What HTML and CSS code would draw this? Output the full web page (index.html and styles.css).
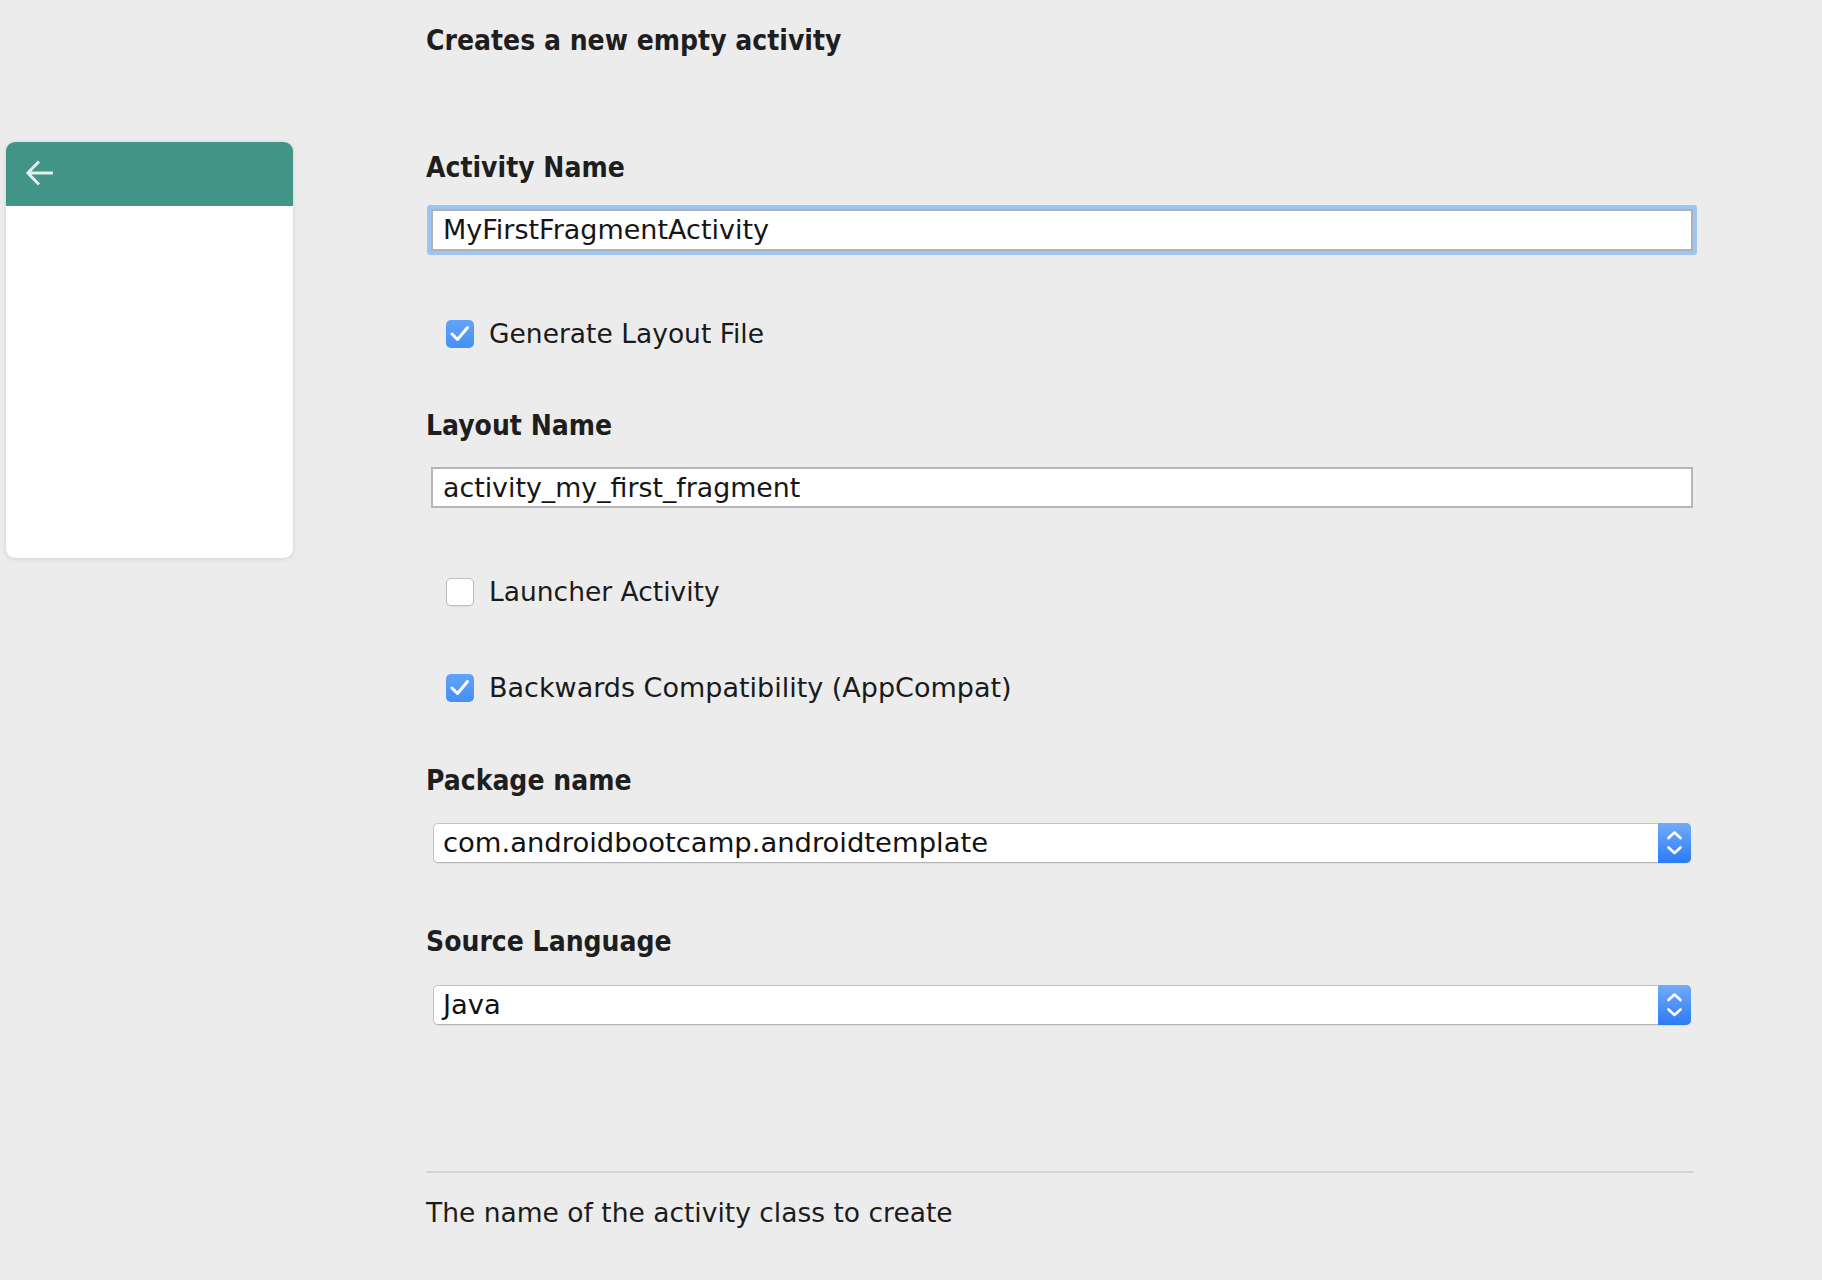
FILE: index.html
```html
<!DOCTYPE html>
<html lang="en">
<head>
<meta charset="utf-8">
<title>Create New Activity</title>
<link rel="stylesheet" href="styles.css">
</head>
<body>
<div class="page">
  <aside class="side">
    <div class="card">
      <div class="card-head">
        <svg class="back" width="28" height="28" viewBox="0 0 28 28">
          <path d="M2 13H27M13 1.5L1.8 13L13 24.5" fill="none" stroke="currentColor" stroke-width="3" stroke-linecap="butt" stroke-linejoin="miter"/>
        </svg>
      </div>
      <div class="card-body"></div>
    </div>
  </aside>

  <main class="main">
    <h1 class="title">Creates a new empty activity</h1>

    <div class="label label-first">Activity Name</div>
    <div class="field field-focus">MyFirstFragmentActivity</div>

    <div class="check-row check-first">
      <span class="box box-on">
        <svg width="28" height="28" viewBox="0 0 28 28"><path d="M6 14L11.5 19.5L21.5 7.5" fill="none" stroke="#fff" stroke-width="3" stroke-linecap="round" stroke-linejoin="round"/></svg>
      </span>
      <span class="check-text">Generate Layout File</span>
    </div>

    <div class="label label-layout">Layout Name</div>
    <div class="field field-plain">activity_my_first_fragment</div>

    <div class="check-row check-after-field">
      <span class="box box-off"></span>
      <span class="check-text">Launcher Activity</span>
    </div>

    <div class="check-row check-next">
      <span class="box box-on">
        <svg width="28" height="28" viewBox="0 0 28 28"><path d="M6 14L11.5 19.5L21.5 7.5" fill="none" stroke="#fff" stroke-width="3" stroke-linecap="round" stroke-linejoin="round"/></svg>
      </span>
      <span class="check-text check-wide">Backwards Compatibility (AppCompat)</span>
    </div>

    <div class="label label-pkg">Package name</div>
    <div class="select">
      <span class="select-text">com.androidbootcamp.androidtemplate</span>
      <span class="select-btn">
        <svg width="33" height="40" viewBox="0 0 33 40"><path d="M10.5 15L16.5 9.5L22.5 15M10.5 24.5L16.5 30L22.5 24.5" fill="none" stroke="#fff" stroke-width="2.6" stroke-linecap="round" stroke-linejoin="round"/></svg>
      </span>
    </div>

    <div class="label label-src">Source Language</div>
    <div class="select select-src">
      <span class="select-text">Java</span>
      <span class="select-btn">
        <svg width="33" height="40" viewBox="0 0 33 40"><path d="M10.5 15L16.5 9.5L22.5 15M10.5 24.5L16.5 30L22.5 24.5" fill="none" stroke="#fff" stroke-width="2.6" stroke-linecap="round" stroke-linejoin="round"/></svg>
      </span>
    </div>

    <hr class="divider">
    <p class="help">The name of the activity class to create</p>
  </main>
</div>
</body>
</html>
```
FILE: styles.css
```css
html, body {
  margin: 0;
  padding: 0;
  background: #ececec;
}
body {
  font-family: "DejaVu Sans", "Liberation Sans", sans-serif;
  color: #1c1c1c;
  width: 1822px;
  height: 1280px;
  overflow: hidden;
}
.page {
  display: flex;
  align-items: flex-start;
  padding-left: 6px;
}
.side {
  width: 287px;
  padding-top: 142px;
  flex: none;
}
.card {
  background: #fff;
  border-radius: 9px;
  box-shadow: 0 1px 5px rgba(0, 0, 0, 0.10), 0 0 1px rgba(0, 0, 0, 0.08);
  overflow: hidden;
}
.card-head {
  height: 64px;
  background: #429486;
  display: flex;
  align-items: center;
  padding-left: 20px;
  color: rgba(255, 255, 255, 0.86);
}
.back { display: block; }
.card-body { height: 352px; }

.main {
  margin-left: 133px;
  width: 1268px;
  padding-top: 24px;
  flex: none;
}
.title, .label {
  font-family: "DejaVu Sans Condensed", "DejaVu Sans", sans-serif;
  font-weight: bold;
  font-size: 28px;
  line-height: 34px;
  margin: 0;
  color: #1e1e1e;
}
.label-first { margin-top: 93px; }
.label-layout { margin-top: 58px; }
.label-pkg { margin-top: 59px; }
.label-src { margin-top: 62px; }

.field {
  margin-top: 24px;
  margin-left: 5px;
  width: 1262px;
  height: 42px;
  box-sizing: border-box;
  border: 2px solid #b1b1b1;
  background: #fff;
  padding-left: 10px;
  font-size: 27px;
  line-height: 38px;
  color: #161616;
  white-space: nowrap;
}
.field-focus {
  box-shadow: 0 0 0 4px #9ec4f1;
  border-radius: 1px;
}
.field-plain {
  margin-top: 24px;
  height: 41px;
  line-height: 37px;
  border-color: #b6b6b6;
  font-size: 26.8px;
}

.check-row {
  display: flex;
  align-items: center;
  height: 34px;
  padding-left: 20px;
  font-size: 26.5px;
}
.check-first { margin-top: 66px; }
.check-after-field { margin-top: 67px; }
.check-next { margin-top: 62px; }
.box {
  width: 28px;
  height: 28px;
  box-sizing: border-box;
  border-radius: 5px;
  flex: none;
  margin-right: 15px;
}
.box svg { display: block; }
.box-on {
  background: linear-gradient(#62a3f7, #4590f4);
}
.box-off {
  background: #fff;
  border: 1px solid #bcbcbc;
  box-shadow: 0 1px 1px rgba(0, 0, 0, 0.05);
}
.check-text { line-height: 34px; color: #1a1a1a; }
.check-wide { font-size: 27px; }

.select {
  margin-top: 25px;
  margin-left: 7px;
  width: 1258px;
  height: 40px;
  box-sizing: border-box;
  display: flex;
  align-items: stretch;
  background: #fff;
  border: 1px solid #c4c4c4;
  border-bottom-color: #b4b4b4;
  border-radius: 5px;
  box-shadow: 0 1px 1px rgba(0, 0, 0, 0.06);
}
.select-src { margin-top: 26px; }
.select-text {
  flex: 1;
  padding-left: 9px;
  font-size: 27.4px;
  line-height: 38px;
  color: #121212;
  white-space: nowrap;
}
.select-btn {
  width: 33px;
  margin: -1px -1px -1px 0;
  border-radius: 0 5px 5px 0;
  background: linear-gradient(#72abf7, #2b7bf6);
  flex: none;
}
.select-btn svg { display: block; }

.divider {
  margin: 146px 0 0 0;
  width: 1268px;
  height: 2px;
  border: 0;
  background: #d3d3d3;
}
.help {
  margin: 23px 0 0 0;
  font-size: 26.5px;
  line-height: 34px;
  color: #1c1c1c;
}
```
